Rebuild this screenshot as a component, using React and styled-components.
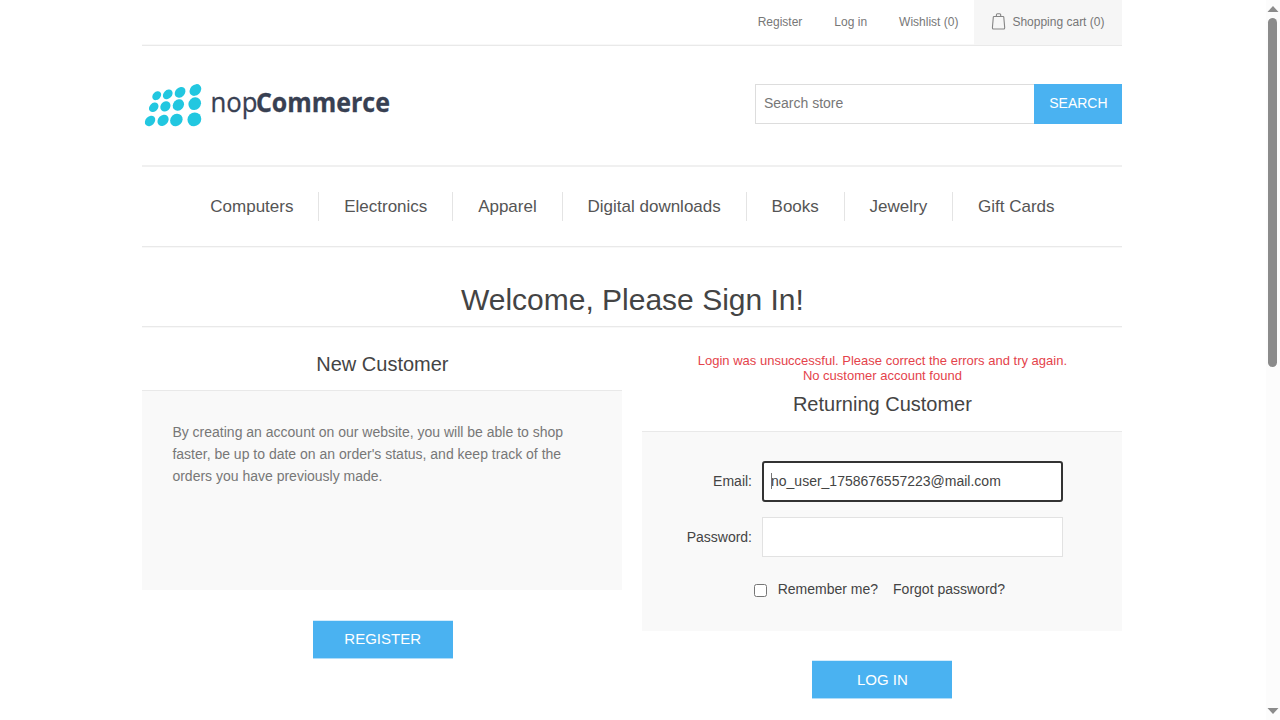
import React from 'react';
import styled, { createGlobalStyle } from 'styled-components';

const GlobalStyle = createGlobalStyle`
  * { box-sizing: border-box; margin: 0; padding: 0; }
  html, body { height: 100%; overflow: hidden; background: #fff; }
  body, input, button { font-family: "Liberation Sans", Arial, sans-serif; }
  a { color: inherit; text-decoration: none; }
  ul { list-style: none; }
`;

const Screen = styled.div`
  display: flex;
  height: 720px;
  overflow: hidden;
  color: #777;
  font-size: 14px;
`;

const Page = styled.div`
  flex: 1;
  padding: 0 143.6px 0 142.4px;
`;

const Scrollbar = styled.div`
  width: 14px;
  padding: 6px 0;
  background: #fcfcfc;
  display: flex;
  flex-direction: column;
  align-items: center;
`;

const Arrow = styled.svg`
  display: block;
  width: 12px;
  height: 6px;
  margin-right: 1px;
`;

const Thumb = styled.div`
  width: 9px;
  height: 349px;
  margin: 6px 1px auto 0;
  border-radius: 5px;
  background: #8b8b8b;
`;

const TopLinks = styled.nav`
  display: flex;
  justify-content: flex-end;
  height: 46px;
  border-bottom: 1px solid #e9e9e9;
  box-shadow: inset 0 -1px #f8f8f8;
  font-size: 12px;
  line-height: 44px;
`;

const TopLink = styled.a`
  padding: 0 16px;
  white-space: nowrap;
`;

const CartLink = styled(TopLink)`
  display: flex;
  align-items: center;
  gap: 5px;
  width: 148px;
  height: 45px;
  padding: 0 0 1px 17px;
  background: #f6f6f6;
`;

const Header = styled.header`
  display: flex;
  align-items: flex-start;
  justify-content: space-between;
  height: 121px;
  padding-top: 38px;
  border-bottom: 2px solid #f0f0f0;
`;

const Logo = styled.svg`
  display: block;
  width: 250px;
  height: 50px;
`;

const SearchForm = styled.form`
  display: flex;
  width: 367px;
  height: 40px;
`;

const SearchInput = styled.input`
  flex: 1;
  min-width: 0;
  padding: 0 8px 2px 7.5px;
  border: 1px solid #ddd;
  border-right: 0;
  font-size: 14px;
  outline: none;
  &::placeholder { color: #777; opacity: 1; }
`;

const BlueButton = styled.button`
  width: ${p => p.$width}px;
  height: ${p => p.$height}px;
  padding-bottom: ${p => p.$lift || 0}px;
  border: 0;
  background: #4ab2f1;
  color: #fff;
  font-size: ${p => p.$size}px;
  text-transform: uppercase;
`;

const Menu = styled.ul`
  display: flex;
  justify-content: center;
  align-items: flex-start;
  height: 80px;
  padding-top: 25px;
  border-bottom: 1px solid #e9e9e9;
  box-shadow: 0 1px #f8f8f8;
`;

const MenuItem = styled.li`
  padding: 0 24.9px;
  font-size: 17px;
  line-height: 29px;
  color: #555;
  white-space: nowrap;
  & + & { border-left: 1px solid #e4e4e4; }
`;

const Title = styled.h1`
  height: 80px;
  padding-top: 33px;
  border-bottom: 1px solid #e9e9e9;
  box-shadow: 0 1px #f8f8f8;
  color: #444;
  font-size: 30px;
  line-height: 40px;
  font-weight: normal;
  text-align: center;
`;

const Columns = styled.main`
  display: grid;
  grid-template-columns: 480px 480px;
  gap: 20px;
  padding-top: 26px;
`;

const Column = styled.section`
  display: flex;
  flex-direction: column;
  align-items: center;
`;

const Errors = styled.div`
  color: #e4434b;
  font-size: 13px;
  line-height: 15px;
  text-align: center;
  padding-bottom: 10px;
`;

const SectionTitle = styled.h2`
  height: ${p => p.$height}px;
  color: #444;
  font-size: 20px;
  line-height: 22px;
  font-weight: normal;
`;

const Panel = styled.div`
  width: 100%;
  height: 200px;
  border-top: 1px solid #e9e9e9;
  background: #f9f9f9;
  padding: 30px 30px 0;
`;

const Blurb = styled.p`
  font-size: 14px;
  line-height: 22px;
`;

const Fields = styled.div`
  margin-top: -1px;
`;

const Field = styled.label`
  display: grid;
  grid-template-columns: 80px 301px;
  column-gap: 10px;
  align-items: center;
  height: ${p => p.$height}px;
  color: #444;
  text-align: right;
`;

const FieldName = styled.span`
  padding-right: 0.4px;
  padding-bottom: ${p => p.$lift || 0}px;
`;

const TextInput = styled.input`
  width: 301px;
  height: ${p => (p.$focused ? 41 : 40)}px;
  padding: ${p => (p.$focused ? '0 6.6px 2px' : '0 7px')};
  border: ${p => (p.$focused ? '2px solid #333' : '1px solid #e2e2e2')};
  border-radius: ${p => (p.$focused ? 3 : 0)}px;
  background: #fff;
  color: #444;
  font-size: 14px;
  outline: none;
`;

const EmailWrap = styled.div`
  position: relative;
  display: flex;
`;

const Caret = styled.i`
  position: absolute;
  left: 9px;
  top: 12px;
  width: 1px;
  height: 16px;
  background: #777;
`;

const Options = styled.div`
  display: flex;
  align-items: center;
  height: 18px;
  margin-top: 7px;
  padding-left: 82px;
  color: #444;
`;

const Checkbox = styled.input`
  width: 13px;
  height: 13px;
  margin: 2px 10.3px 0 0;
`;

const Forgot = styled.a`
  margin-left: 15px;
`;

const ActionRow = styled.div`
  padding-top: ${p => p.$top}px;
  padding-left: ${p => p.$shift || 0}px;
`;

const ActionButton = styled(BlueButton)`
  box-shadow: 0 -1px #d3ecfc, 0 1px #b0ddf9;
`;

const DOTS = [
  [43, 47, 15, 11.5], [76, 43, 16.5, 12.5], [113, 37, 18, 14], [159, 30, 19.5, 15.5],
  [34, 82, 16, 12.5], [69, 79, 16.5, 14], [108, 75, 18.5, 15.5], [157, 71, 20, 18],
  [23, 123, 17.5, 13.5], [62, 121, 18.5, 15], [102, 120, 20, 17.5], [156, 118, 21.5, 20],
];

const MENU = ['Computers', 'Electronics', 'Apparel', 'Digital downloads', 'Books', 'Jewelry', 'Gift Cards'];

function NopLogo() {
  return (
    <Logo viewBox="141.600 84 250 50">
      <g transform="translate(142 80) scale(.33333)" fill="#22c7e0">
        {DOTS.map(([x, y, rx, ry]) => (
          <ellipse key={`${x}-${y}`} rx={rx} ry={ry} transform={`translate(${x} ${y}) rotate(-45)`} />
        ))}
      </g>
      <g fill="#384052" fontFamily='"Open Sans", "Noto Sans", sans-serif' fontSize="27">
        <text x="210" y="112.3" textLength="47" lengthAdjust="spacingAndGlyphs" stroke="#384052" strokeWidth=".3">nop</text>
        <text x="255.500" y="112.3" fontWeight="700" textLength="134" lengthAdjust="spacingAndGlyphs" stroke="#384052" strokeWidth=".3">Commerce</text>
      </g>
    </Logo>
  );
}

function BagIcon() {
  return (
    <svg width="16" height="18" viewBox="0 0 16 18" fill="none" stroke="#858585" strokeWidth="1.1">
      <path d="M3 3.500h9q.7 0 .8.7l.9 10.500q0 1.300-1 1.300H2.400q-1 0-1-1.300L2.300 4.200q.1-.7.700-.7z" />
      <path d="M5.400 3.500V2q0-1.300 1.100-1.300h2.100Q9.700.7 9.700 2v1.500" />
    </svg>
  );
}

export default function App() {
  return (
    <Screen>
      <GlobalStyle />
      <Page>
        <TopLinks>
          <TopLink href="#">Register</TopLink>
          <TopLink href="#">Log in</TopLink>
          <TopLink href="#">Wishlist (0)</TopLink>
          <CartLink href="#"><BagIcon />Shopping cart (0)</CartLink>
        </TopLinks>
        <Header>
          <NopLogo />
          <SearchForm>
            <SearchInput placeholder="Search store" />
            <BlueButton type="button" $width={88} $height={40} $size={14} $lift={2}>Search</BlueButton>
          </SearchForm>
        </Header>
        <Menu>{MENU.map(name => <MenuItem key={name}><a href="#">{name}</a></MenuItem>)}</Menu>
        <Title>Welcome, Please Sign In!</Title>
        <Columns>
          <Column>
            <SectionTitle $height={37}>New Customer</SectionTitle>
            <Panel>
              <Blurb>
                By creating an account on our website, you will be able to shop faster, be up to date on
                an order's status, and keep track of the orders you have previously made.
              </Blurb>
            </Panel>
            <ActionRow $top={31} $shift={0.6}>
              <ActionButton $width={140} $height={37} $size={15} $lift={3}>Register</ActionButton>
            </ActionRow>
          </Column>
          <Column>
            <Errors>
              <p>Login was unsuccessful. Please correct the errors and try again.</p>
              <p>No customer account found</p>
            </Errors>
            <SectionTitle $height={38}>Returning Customer</SectionTitle>
            <Panel>
              <Fields>
                <Field $height={40}>
                  <FieldName $lift={2}>Email:</FieldName>
                  <EmailWrap>
                    <TextInput $focused defaultValue="no_user_1758676557223@mail.com" />
                    <Caret />
                  </EmailWrap>
                </Field>
                <Field $height={72}>
                  <FieldName>Password:</FieldName>
                  <TextInput type="password" />
                </Field>
              </Fields>
              <Options>
                <Checkbox type="checkbox" id="remember" />
                <label htmlFor="remember">Remember me?</label>
                <Forgot href="#">Forgot password?</Forgot>
              </Options>
            </Panel>
            <ActionRow $top={30}>
              <ActionButton $width={140} $height={37} $size={15}>Log in</ActionButton>
            </ActionRow>
          </Column>
        </Columns>
      </Page>
      <Scrollbar>
        <Arrow viewBox="0 0 12 6"><path d="M6 0 11.500 6H.5z" fill="#8b8b8b" /></Arrow>
        <Thumb />
        <Arrow viewBox="0 0 12 6"><path d="M.5 0h11L6 6z" fill="#8b8b8b" /></Arrow>
      </Scrollbar>
    </Screen>
  );
}
